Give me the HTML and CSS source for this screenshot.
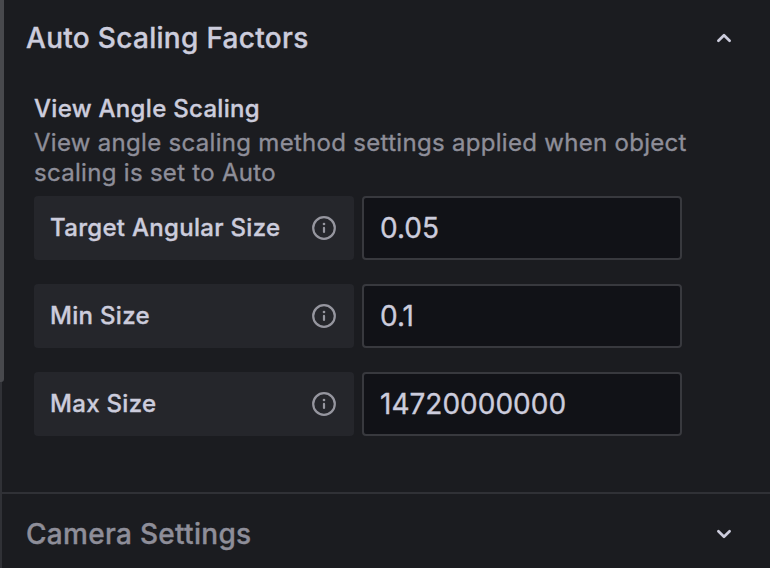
FILE: index.html
```html
<!DOCTYPE html>
<html lang="en">
<head>
<meta charset="utf-8">
<title>Panel options</title>
<link rel="stylesheet" href="styles.css">
</head>
<body>
<div class="pane">
  <div class="scroll-thumb"></div>
  <section class="category">
    <header class="category-header">
      <h2>Auto Scaling Factors</h2>
      <svg class="chevron" viewBox="0 0 16 16"><path d="M2.4 10.7 8 5.2l5.6 5.5"/></svg>
    </header>
    <div class="category-body">
      <h3>View Angle Scaling</h3>
      <p>View angle scaling method settings applied when object<br>scaling is set to Auto</p>
      <div class="fields">
        <div class="field">
          <label for="target"><span>Target Angular Size</span><svg class="info" viewBox="0 0 24 24"><circle cx="12" cy="12" r="10.8"/><path d="M12 11.9v4"/><circle class="dot" cx="12" cy="8" r="1.3"/></svg></label>
          <input id="target" type="text" value="0.05">
        </div>
        <div class="field">
          <label for="min"><span>Min Size</span><svg class="info" viewBox="0 0 24 24"><circle cx="12" cy="12" r="10.8"/><path d="M12 11.9v4"/><circle class="dot" cx="12" cy="8" r="1.3"/></svg></label>
          <input id="min" type="text" value="0.1">
        </div>
        <div class="field">
          <label for="max"><span>Max Size</span><svg class="info" viewBox="0 0 24 24"><circle cx="12" cy="12" r="10.8"/><path d="M12 11.9v4"/><circle class="dot" cx="12" cy="8" r="1.3"/></svg></label>
          <input id="max" type="text" value="14720000000">
        </div>
      </div>
    </div>
  </section>
  <section class="category collapsed">
    <header class="category-header">
      <h2>Camera Settings</h2>
      <svg class="chevron" viewBox="0 0 16 16"><path d="M2.4 5.3 8 10.8l5.6-5.5"/></svg>
    </header>
  </section>
</div>
</body>
</html>
```
FILE: styles.css
```css
* { box-sizing: border-box; }
body {
  margin: 0;
  background: #1b1c20;
  color: #ccccdc;
  font-family: Inter, sans-serif;
  letter-spacing: 0.3px;
  -webkit-text-stroke: 0.35px currentColor;
}
.pane {
  position: relative;
  height: 568px;
  padding-left: 2px;
  overflow: hidden;
  box-shadow: inset 2px 0 #303136;
}
.scroll-thumb {
  position: absolute;
  left: -2px;
  top: -10px;
  width: 6px;
  height: 392px;
  border-radius: 3px;
  background: #48494d;
}
h2, h3, p { margin: 0; font-weight: 500; }
.category { height: 492px; }
.category-header {
  display: flex;
  align-items: center;
  justify-content: space-between;
  height: 76px;
  padding: 0 38px 0 24px;
}
h2 { font-size: 28px; line-height: 36px; }
.chevron {
  width: 16px;
  height: 16px;
  fill: none;
  stroke: currentColor;
  stroke-width: 2.7;
  stroke-linecap: round;
  stroke-linejoin: round;
}
.category-body { padding: 18px 0 0 32px; }
h3 { font-size: 24px; line-height: 30px; }
p {
  margin-top: 4px;
  font-size: 24px;
  font-weight: 400;
  line-height: 30px;
  color: #8e8e99;
}
.fields { display: grid; gap: 24px; margin-top: 8px; }
.field { display: flex; gap: 8px; }
label {
  display: flex;
  align-items: center;
  justify-content: space-between;
  width: 320px;
  height: 64px;
  padding: 0 18px 0 16px;
  border-radius: 4px;
  background: #25262b;
  font-size: 24px;
  font-weight: 500;
}
label span { padding-bottom: 2px; }
.info {
  width: 24px;
  height: 24px;
  fill: none;
  stroke: #96969f;
  stroke-width: 2.2;
  stroke-linecap: round;
}
.dot { fill: #96969f; stroke: none; }
input {
  width: 320px;
  height: 64px;
  padding: 0 16px;
  border: 2px solid #38393e;
  border-radius: 4px;
  background: #111217;
  color: #ccccdc;
  font: 400 28px Inter, sans-serif;
}
.collapsed { height: 76px; border-top: 2px solid #303136; }
.collapsed .category-header { height: 80px; }
.collapsed h2 { color: #8e8e99; }
```
